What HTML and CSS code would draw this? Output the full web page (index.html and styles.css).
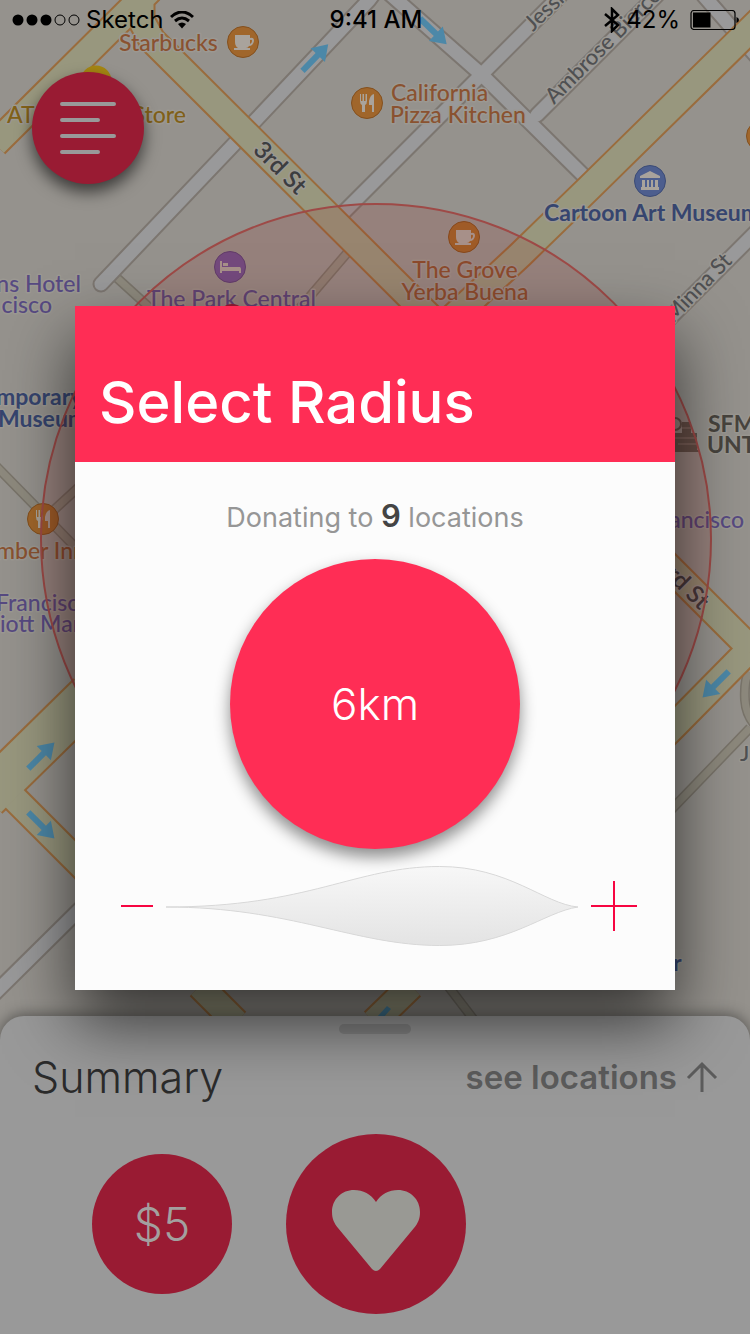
FILE: index.html
```html
<!DOCTYPE html>
<html lang="en">
<head>
<meta charset="utf-8">
<meta name="viewport" content="width=device-width, initial-scale=1">
<title>Select Radius</title>
<link rel="stylesheet" href="styles.css">
</head>
<body>
<div class="screen">
  <svg class="map" viewBox="0 0 750 1334" preserveAspectRatio="xMidYMin slice" aria-hidden="true">
    <defs>
      <path id="alley" d="M117 278L150 308M348 252L300 308M-4 466L44 515L80 552M44 519L80 486M750 728L670 811M749 672Q744 680 745 700Q746 714 754 724M448 986L474 1020"/>
      <path id="street" d="M101 284L236 142L254 122L369 0L375 -8M342 214L480 76L560 -4M390 -6L482 75L583 175M537 115L657 -5M704 -4L765 66M664 324L758 230M-6 994L80 909"/>
      <path id="avenue" d="M-5 144L150 -10M141 0L141 20L152 40L460 347M760 20L588 189L520 255L450 320M750 649L674 726L650 750M660 558L752 650M0 784L90 874M200 986L236 1022M411 986L374 1022"/>
      <path id="wide" d="M-14 797L90 695"/>
      <path id="arrow" d="M-18 -3H4V-10L19 0L4 10V3H-18Z"/>
      <g id="cup"><circle class="food-badge" r="15.500"/><path class="glyph" d="M-8 -7H7V-4Q11 -5 11 -1Q10 4 6 4Q5 6 3 6H7V8H-9V6H-5Q-8 4 -8 0ZM7 -2V2Q9 1 9 -1Q9 -3 7 -2Z"/></g>
      <g id="fork"><circle class="food-badge" r="15.500"/><path class="glyph" d="M-7 -9H-6V-2H-4.500V-9H-3V-2H-1.500V-9H0V-2Q0 1 -2 2V9H-5V2Q-7 1 -7 -2ZM7 -9V9H5V2H2V-2Q3 -8 7 -9Z"/></g>
    </defs>
    <use class="alley-edge" href="#alley"/><use class="alley-fill" href="#alley"/>
    <use class="street-edge" href="#street"/><use class="street-fill" href="#street"/>
    <use class="avenue-edge" href="#avenue"/><use class="wide-edge" href="#wide"/>
    <use class="avenue-fill" href="#avenue"/><use class="wide-fill" href="#wide"/>

    <g class="arrows">
      <use href="#arrow" transform="translate(315 58) rotate(-46)"/>
      <use href="#arrow" transform="translate(433 31) rotate(44)"/>
      <use href="#arrow" transform="translate(41 756) rotate(-45)"/>
      <use href="#arrow" transform="translate(41 825) rotate(45)"/>
      <use href="#arrow" transform="translate(716 684) rotate(135)"/>
      <path d="M376 1018L387 1006L391 1009L383 1018Z"/>
    </g>

    <g class="landmark">
      <circle cx="675" cy="424" r="6" fill="none" stroke="#5d554d" stroke-width="2"/>
      <path d="M682 422H691V433H697V450H672V433H682ZM672 450H699V452H672Z"/>
      <path d="M672 438H697M678 444H697M682 428H691" stroke="#8a7d75" stroke-width="1"/>
    </g>

    <g class="roads">
      <text transform="translate(252 151) rotate(45)" class="major">3rd St</text>
      <text transform="translate(655 566) rotate(45)" class="major">3rd St</text>
      <text transform="translate(533 32) rotate(-44)">Jessie St</text>
      <text transform="translate(554 105) rotate(-45)">Ambrose Bierce</text>
      <text transform="translate(673 324) rotate(-46)">Minna St</text>
      <text x="740" y="761">J</text>
    </g>

    <g class="food">
      <use href="#cup" x="243" y="42"/><use href="#fork" x="367" y="103"/>
      <use href="#cup" x="464" y="237"/><use href="#fork" x="43" y="519"/><circle class="food-badge" cx="762" cy="136" r="15.500"/>
      <text x="119" y="51">Starbucks</text>
      <text x="391" y="101">California</text><text x="390" y="123">Pizza Kitchen</text>
      <text x="465" y="278" text-anchor="middle">The Grove</text>
      <text x="465" y="300" text-anchor="middle">Yerba Buena</text>
      <text x="-4" y="559">mber Inn</text>
    </g>
    <g class="shop"><circle cx="96" cy="81" r="15.500"/><text x="7" y="123">AT&amp;T</text><text x="186" y="123" text-anchor="end">Store</text></g>
    <g class="museum">
      <circle cx="650" cy="181" r="15.500"/>
      <path class="glyph" d="M650 171L660 176V178H640V176ZM642 180H645V187H642ZM647 180H649V187H647ZM651 180H653V187H651ZM655 180H658V187H655ZM641 187H659V190H641Z"/>
      <text x="544" y="221">Cartoon Art Museum</text>
      <text x="-4" y="405">mporary</text><text x="-2" y="427">Museum</text><text x="673" y="971">r</text>
    </g>
    <g class="hotel">
      <circle cx="230" cy="267" r="15.500"/>
      <path class="glyph" d="M220 261H222V267H240Q241 268 241 269V273H239V271H222V273H220ZM223 263H228V266H223Z"/>
      <text x="147" y="307">The Park Central</text>
      <text x="81" y="292" text-anchor="end">ns Hotel</text><text x="52" y="313" text-anchor="end">cisco</text>
      <text x="-4" y="611">Francisco</text><text x="0" y="632">iott Marquis</text>
      <text x="744" y="528" text-anchor="end">Francisco</text>
    </g>
    <g class="modern"><text x="708" y="432">SFMOMA</text><text x="707" y="453">UNTITLED</text></g>

    <circle class="radius" cx="376" cy="539" r="335"/>
    <circle cx="232" cy="318" r="14" fill="#991b33"/>
  </svg>

  <header class="status">
    <div class="status-side">
      <svg width="68" height="12" viewBox="0 0 68 12" aria-hidden="true"><circle cx="6" cy="6" r="5.500"/><circle cx="20" cy="6" r="5.500"/><circle cx="34" cy="6" r="5.500"/><circle cx="48" cy="6" r="5" fill="none" stroke="#000"/><circle cx="62" cy="6" r="5" fill="none" stroke="#000"/></svg>
      <span>Sketch</span>
      <svg width="24" height="18" viewBox="0 0 24 18" aria-hidden="true"><path d="M1 6Q12 -4 23 6M5 10Q12 4 19 10" fill="none" stroke="#000" stroke-width="3"/><path d="M8 13Q12 10 16 13L12 17.500Z"/></svg>
    </div>
    <time class="clock">9:41 AM</time>
    <div class="status-side status-end">
      <svg width="16" height="26" viewBox="0 0 16 26" aria-hidden="true"><path d="M1 7L14 18L8 24V2L14 8L1 19" fill="none" stroke="#000" stroke-width="2.500"/></svg>
      <span class="percent">42%</span>
      <svg width="50" height="20" viewBox="0 0 50 20" aria-hidden="true"><rect x="1" y=".500" width="44" height="19" rx="3" fill="none" stroke="#000" stroke-width="1.200"/><path d="M3 2.500H20.500V17.500H3ZM46.500 7Q49 8 49 10Q49 12 46.500 13Z"/></svg>
    </div>
  </header>

  <button class="menu" type="button" aria-label="Menu">
    <svg width="56" height="52" viewBox="0 0 56 52" aria-hidden="true"><path d="M2 2H54M2 18H38M2 34H54M2 50H38"/></svg>
  </button>

  <section class="summary">
    <div class="handle"></div>
    <div class="summary-head">
      <h2>Summary</h2>
      <button class="see" type="button">see locations
        <svg width="32" height="32" viewBox="0 0 32 32" aria-hidden="true"><path d="M16 31V3M2 17L16 3L30 17"/></svg>
      </button>
    </div>
    <div class="actions">
      <button class="amount" type="button">$5</button>
      <button class="favorite" type="button" aria-label="Donate">
        <svg width="88" height="82" viewBox="0 0 88 82" aria-hidden="true"><path d="M44 12C39 4 31 0 22 0C10 0 0 9 0 22C0 29 2 33 6 38L40 79Q44 83 48 79L82 38C86 33 88 29 88 22C88 9 78 0 66 0C57 0 49 4 44 12Z"/></svg>
      </button>
    </div>
  </section>

  <div class="overlay">
    <div class="dialog" role="dialog" aria-labelledby="dialog-title">
      <div class="dialog-head"><h1 id="dialog-title">Select Radius</h1></div>
      <div class="dialog-body">
        <p class="count">Donating to <strong>9</strong> locations</p>
        <output class="distance" for="radius">6km</output>
        <div class="control">
          <button class="step" type="button" aria-label="Decrease radius"><svg width="32" height="50" viewBox="0 0 32 50" aria-hidden="true"><path d="M0 25H32"/></svg></button>
          <div class="track">
            <svg viewBox="0 0 414 80" preserveAspectRatio="none" aria-hidden="true">
              <defs><linearGradient id="leaf" x1="0" y1="0" x2="0.060" y2="1"><stop offset="0" stop-color="#f8f8f8"/><stop offset="1" stop-color="#e4e4e4"/></linearGradient></defs>
              <path d="M0 41C145 41 190 0.500 275 0.500C345 0.500 380 38 414 41C380 46 345 79.500 275 79.500C190 79.500 125 41 0 41Z" fill="url(#leaf)" stroke="#d8d8d8"/>
            </svg>
            <input id="radius" type="range" min="1" max="10" value="6" aria-label="Radius in kilometres">
          </div>
          <button class="step" type="button" aria-label="Increase radius"><svg width="46" height="50" viewBox="0 0 46 50" aria-hidden="true"><path d="M0 25H46M23 0V50"/></svg></button>
        </div>
      </div>
    </div>
  </div>
</div>
</body>
</html>
```

FILE: styles.css
```css
* { box-sizing: border-box; }
body { margin: 0; font-family: Inter, "Liberation Sans", sans-serif; }
button { padding: 0; border: 0; background: none; font: inherit; color: inherit; cursor: pointer; }
h1, h2, p { margin: 0; }
svg { display: block; }

.screen {
  position: relative;
  display: flex;
  flex-direction: column;
  min-height: 100vh;
  overflow: hidden;
  background: #95928d;
}

/* Map */
.map { position: absolute; inset: 0; width: 100%; height: 100%; font-family: Lato, "Open Sans", sans-serif; font-size: 23px; font-weight: 500; }
.alley-edge, .alley-fill, .street-edge, .street-fill, .avenue-edge, .avenue-fill, .wide-edge, .wide-fill { fill: none; }
.alley-edge { stroke: #79746a; stroke-width: 10px; }
.alley-fill { stroke: #8d897d; stroke-width: 7px; }
.street-edge { stroke: #7c7670; stroke-width: 17px; stroke-linecap: round; }
.street-fill { stroke: #99999a; stroke-width: 13px; stroke-linecap: round; }
.avenue-edge { stroke: #9a6c3d; stroke-width: 29px; }
.avenue-fill { stroke: #98977e; stroke-width: 25px; }
.wide-edge { stroke: #9a6c3d; stroke-width: 47px; }
.wide-fill { stroke: #98977e; stroke-width: 43px; }
.arrows { fill: #4c88a8; }
.landmark { fill: #5d554d; }
.map text { paint-order: stroke; stroke: #9b9892; stroke-width: 3px; stroke-linejoin: round; }
.roads { fill: #4f5052; font-size: 22px; }
.roads .major { fill: #3c3d40; font-size: 24px; font-weight: 600; }
.food-badge { fill: #a0662b; stroke: #84501e; }
.food text { fill: #8a5230; }
.shop circle { fill: #a58612; }
.shop text { fill: #806018; }
.museum circle { fill: #4d5e8e; stroke: #3c4b76; }
.museum text { fill: #36456f; font-weight: 700; }
.hotel circle { fill: #6e518e; stroke: #5a4278; }
.hotel text { fill: #574a82; }
.modern text { fill: #48443e; font-weight: 700; }
.glyph { fill: #a9a39c; stroke: none; }
.map .museum .glyph, .map .hotel .glyph { fill: #a9a39c; }
.radius { fill: rgba(153, 27, 20, .14); stroke: #9e4a47; stroke-width: 2px; }

/* Status bar */
.status { position: relative; display: grid; grid-template-columns: 1fr auto 1fr; align-items: center; height: 40px; padding: 0 10px 0 12px; font-size: 24px; line-height: 32px; color: #000; }
.status-side { display: flex; align-items: center; gap: 6px; }
.status-end { justify-content: flex-end; }
.percent { margin: 0 4px 0 0; }
.clock { font-weight: 500; }

.menu {
  position: relative;
  display: grid;
  place-items: center;
  width: 112px;
  height: 112px;
  margin: 32px 32px 0;
  border-radius: 50%;
  background: #991b33;
  box-shadow: 0 8px 16px rgba(0, 0, 0, .6);
}
.menu path { fill: none; stroke: #999; stroke-width: 4px; stroke-linecap: round; }

/* Summary panel */
.summary {
  position: relative;
  display: flex;
  flex-direction: column;
  margin-top: auto;
  padding: 8px 32px 20px;
  border-radius: 24px 24px 0 0;
  background: #999;
  box-shadow: 0 -2px 14px rgba(0, 0, 0, .4);
}
.handle { align-self: center; width: 72px; height: 10px; border-radius: 5px; background: #868686; }
.summary-head { display: flex; justify-content: space-between; align-items: center; height: 86px; }
.summary h2 { color: #2b2b2b; font-size: 43px; font-weight: 300; line-height: 56px; }
.see { display: flex; align-items: center; gap: 9px; color: #5c5c5c; font-size: 33px; font-weight: 600; line-height: 40px; }
.see path { fill: none; stroke: #5c5c5c; stroke-width: 3px; }
.actions { display: flex; align-items: center; gap: 54px; margin-top: 14px; padding-left: 60px; }
.amount, .favorite { display: grid; place-items: center; border-radius: 50%; background: #991b33; }
.amount { width: 140px; height: 140px; color: #a3a09f; font-size: 46px; font-weight: 300; }
.favorite { width: 180px; height: 180px; }
.favorite path { fill: #999994; }
.favorite svg { margin-top: 14px; }

/* Radius dialog */
.overlay { position: absolute; inset: 0; display: grid; place-items: center; padding: 0 10% 38px; }
.dialog { width: 100%; background: #fcfcfc; box-shadow: 0 32px 64px rgba(0, 0, 0, .65); }
.dialog-head { padding: 60px 24px 24px; background: #ff2d55; color: #fff; }
.dialog-head h1 { font-size: 58px; font-weight: 500; line-height: 72px; }
.dialog-body { display: flex; flex-direction: column; align-items: center; padding: 36px 38px 44px; }
.count { color: #969696; font-size: 27px; line-height: 40px; }
.count strong { color: #444; font-size: 31px; font-weight: 600; line-height: 1; }
.distance {
  display: grid;
  place-items: center;
  width: 290px;
  height: 290px;
  margin-top: 21px;
  border-radius: 50%;
  background: #ff2d55;
  color: #fff;
  font-size: 44px;
  font-weight: 300;
  box-shadow: 0 8px 16px rgba(0, 0, 0, .45);
}
.control { display: flex; align-items: center; gap: 13px; width: 100%; margin-top: 17px; padding-left: 8px; }
.step { flex: none; }
.step path { fill: none; stroke: #f70541; stroke-width: 2px; }
.track { position: relative; flex: 1; height: 80px; }
.track svg { width: 100%; height: 100%; overflow: visible; }
.track input { position: absolute; inset: 0; width: 100%; height: 100%; margin: 0; opacity: 0; cursor: pointer; }
```
